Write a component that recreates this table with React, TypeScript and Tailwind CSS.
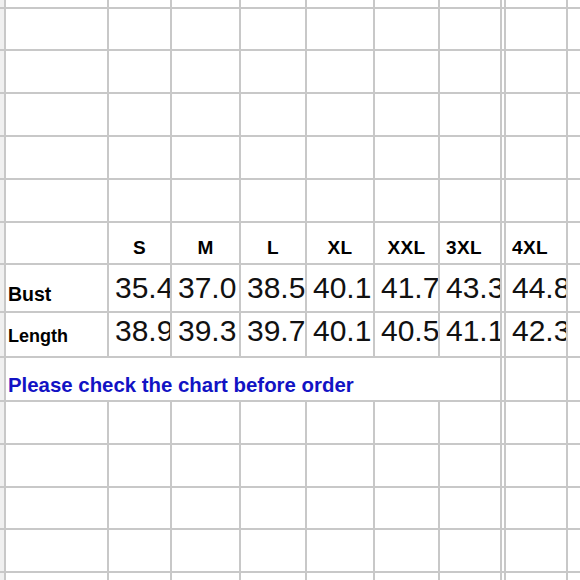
import React from "react";

const sizes = ["S", "M", "L", "XL", "XXL", "3XL", "4XL"];
const bust = ["35.4", "37.0", "38.5", "40.1", "41.7", "43.3", "44.8"];
const length = ["38.9", "39.3", "39.7", "40.1", "40.5", "41.1", "42.3"];

const Strip = () => <div className="bg-[#f0f0f0]" />;
const Blank = () => <div className="bg-white" />;

const App: React.FC = () => {
  const rows: React.ReactNode[] = [];

  const emptyRow = (key: string) => (
    <React.Fragment key={key}>
      <Strip />
      {Array.from({ length: 10 }).map((_, i) => (
        <Blank key={i} />
      ))}
    </React.Fragment>
  );

  for (let r = 0; r < 6; r++) rows.push(emptyRow(`top-${r}`));

  // Header row
  rows.push(
    <React.Fragment key="header">
      <Strip />
      <Blank />
      {sizes.map((s, i) => (
        <React.Fragment key={s}>
          {i === 6 && <Blank />}
          <div
            className={`bg-white flex items-end pb-[6px] overflow-hidden whitespace-nowrap text-[19px] tracking-[0.4px] leading-none font-bold text-black ${
              i >= 5 ? "justify-start pl-[6px]" : "justify-center"
            }`}
          >
            {s}
          </div>
        </React.Fragment>
      ))}
      <Blank />
    </React.Fragment>
  );

  const dataRow = (key: string, label: string, values: string[], labelCls: string, valCls: string) => (
    <React.Fragment key={key}>
      <Strip />
      <div className={`bg-white flex items-end pl-[2px] overflow-hidden whitespace-nowrap font-bold text-black leading-none ${labelCls}`}>
        {label}
      </div>
      {values.map((v, i) => (
        <React.Fragment key={i}>
          {i === 6 && <Blank />}
          <div
            className={`bg-white flex items-end pl-[6px] overflow-hidden whitespace-nowrap text-[30px] leading-none text-[#111] ${valCls}`}
          >
            {v}
          </div>
        </React.Fragment>
      ))}
      <Blank />
    </React.Fragment>
  );

  rows.push(dataRow("bust", "Bust", bust, "text-[19.5px] pb-[7px]", "pb-[8px]"));
  rows.push(dataRow("length", "Length", length, "text-[18px] pb-[11px]", "pb-[10px]"));

  // Note row
  rows.push(
    <React.Fragment key="note">
      <Strip />
      <div className="col-span-7 bg-white flex items-end pl-[2px] pb-[5px] whitespace-nowrap text-[20.4px] leading-none font-bold text-[#1212c4]">
        Please check the chart before order
      </div>
      <Blank />
      <Blank />
      <Blank />
    </React.Fragment>
  );

  for (let r = 0; r < 5; r++) rows.push(emptyRow(`bottom-${r}`));

  return (
    <div className="w-[580px] h-[580px] overflow-hidden bg-white font-['Liberation_Sans',Arial,sans-serif]">
      <div className="grid gap-[2px] bg-[#c8c8c8] grid-cols-[4px_101px_61px_67px_64px_66px_63px_60px_2px_60px_12px] grid-rows-[7px_40px_41px_41px_41px_41px_40px_46px_43px_42px_41px_41px_40px_41px_7px]">
        {rows}
      </div>
    </div>
  );
};

export default App;
